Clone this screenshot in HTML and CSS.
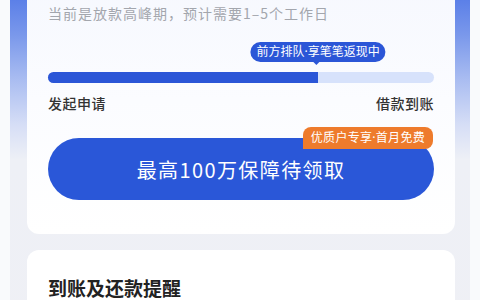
FILE: index.html
```html
<!DOCTYPE html>
<html lang="zh-CN">
<head>
  <meta charset="UTF-8">
  <meta name="viewport" content="width=device-width, initial-scale=1.0">
  <title>借款进度</title>
  <link rel="stylesheet" href="styles.css">
</head>
<body>

  <div class="page">
    <div class="card status">
      <p class="notice">当前是放款高峰期，预计需要1–5个工作日</p>

      <div class="bar">
        <div class="bar-fill" style="width: 70%;">
          <span class="tip">前方排队·享笔笔返现中</span>
        </div>
      </div>

      <div class="steps">
        <span>发起申请</span>
        <span>借款到账</span>
      </div>

      <div class="claim">
        <span class="badge">优质户专享·首月免费</span>
        <button class="claim-btn">最高100万保障待领取</button>
      </div>
    </div>

    <div class="card remind">
      <h3>到账及还款提醒</h3>
    </div>
  </div>

</body>
</html>
```

FILE: styles.css
```css
body {
  margin: 0;
  background-color: #f9fafc;
  font-family: "Noto Sans CJK SC", "Noto Sans", sans-serif;
  overflow: hidden;
}

.page {
  margin: 0 10px;
  padding: 0 15px 40px 17px;
  min-height: 320px;
  background: linear-gradient(180deg, #4a72e6 0, #7a98eb 55px, #aabdf1 100px, #d6def6 145px, #eef0f6 180px, #eff0f5 100%);
}

.card {
  background-color: #fff;
  border-radius: 12px;
  padding: 0 21px;
}

.status {
  margin-top: -20px;
  padding-top: 23px;
  padding-bottom: 34px;
  background: linear-gradient(180deg, #f6f8fe 0, #fbfcff 120px, #fff 100%);
}

.notice {
  margin: 0;
  font-size: 14px;
  line-height: 20px;
  letter-spacing: 1px;
  color: #a3a6ad;
}

.bar {
  margin-top: 49px;
  height: 11px;
  border-radius: 6px;
  background-color: #d7e2fb;
}

.bar-fill {
  position: relative;
  height: 100%;
  border-radius: 6px 0 0 6px;
  background-color: #2b56d7;
}

/* 中点用西文字体，保持窄点 */
.tip,
.badge {
  font-family: "Noto Sans", "Noto Sans CJK SC", sans-serif;
}

.tip {
  position: absolute;
  left: 100%;
  bottom: 21px;
  transform: translateX(-50%);
  padding: 0 6px;
  height: 20px;
  line-height: 20px;
  border-radius: 10px;
  background-color: #2b56d7;
  color: #fff;
  font-size: 12px;
  white-space: nowrap;
}

.tip::after {
  content: "";
  position: absolute;
  left: 50%;
  top: 19px;
  margin-left: -6px;
  border: 4px solid transparent;
  border-top-color: #2b56d7;
}

.steps {
  display: flex;
  justify-content: space-between;
  margin-top: 10px;
  font-size: 14px;
  line-height: 20px;
  font-weight: 500;
  letter-spacing: 0.5px;
  color: #333;
}

.claim {
  position: relative;
  margin-top: 14px;
  padding-top: 11px;
}

.badge {
  position: absolute;
  top: 0;
  right: 1px;
  height: 22px;
  line-height: 22px;
  padding: 0 8px;
  border-radius: 8px 8px 8px 0;
  background-color: #ee7b2c;
  color: #fff;
  font-size: 12px;
  letter-spacing: 0.3px;
  z-index: 1;
}

.claim-btn {
  display: block;
  width: 100%;
  height: 62px;
  border: none;
  border-radius: 31px;
  background-color: #2a57d8;
  color: #fff;
  font-family: inherit;
  font-size: 20px;
  letter-spacing: 1.4px;
}

.remind {
  margin-top: 16px;
  padding-top: 25px;
  padding-bottom: 20px;
}

.remind h3 {
  margin: 0;
  font-size: 19px;
  line-height: 26px;
  font-weight: 700;
  color: #222;
}
```
